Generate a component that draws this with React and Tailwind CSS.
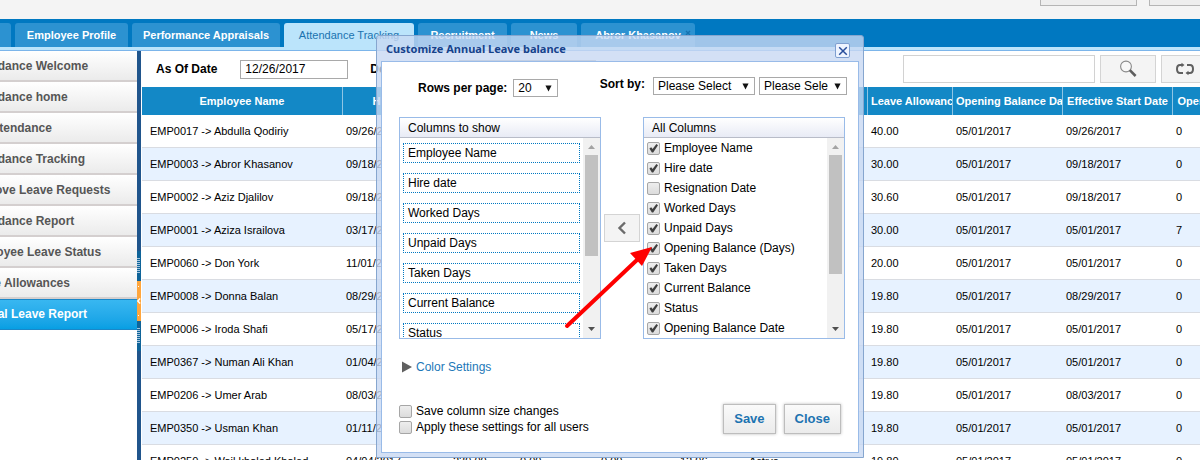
import { useState } from "react";

const tabs = [
  { label: "Employee Profile", width: "w-[113px]" },
  { label: "Performance Appraisals", width: "w-[148px]" },
  { label: "Attendance Tracking", width: "w-[130px]", active: true },
  { label: "Recruitment", width: "w-[89px]" },
  { label: "News", width: "w-[66px]" },
  { label: "Abror Khasanov", width: "w-[114px]", closable: true },
];

const menu = [
  "Attendance Welcome",
  "Attendance home",
  "My Attendance",
  "Attendance Tracking",
  "Approve Leave Requests",
  "Attendance Report",
  "Employee Leave Status",
  "Leave Allowances",
  "Annual Leave Report",
];

const columns = [
  { title: "Employee Name", width: "w-[201px]" },
  { title: "Hire date", width: "w-[107px]" },
  { title: "", width: "w-[67px]" },
  { title: "", width: "w-[81px]" },
  { title: "", width: "w-[79px]" },
  { title: "", width: "w-[69px]" },
  { title: "", width: "w-[122px]" },
  { title: "Leave Allowance", width: "w-[85px]" },
  { title: "Opening Balance Date", width: "w-[110px]" },
  { title: "Effective Start Date", width: "w-[110px]" },
  { title: "Opening Balance", width: "w-[100px]" },
];

const rows = [
  ["EMP0017 -> Abdulla Qodiriy", "09/26/2017", "", "", "", "", "", "40.00", "05/01/2017", "09/26/2017", "0"],
  ["EMP0003 -> Abror Khasanov", "09/18/2017", "", "", "", "", "", "30.00", "05/01/2017", "09/18/2017", "0"],
  ["EMP0002 -> Aziz Djalilov", "09/18/2017", "", "", "", "", "", "30.60", "05/01/2017", "09/18/2017", "0"],
  ["EMP0001 -> Aziza Israilova", "03/17/2017", "", "", "", "", "", "30.00", "05/01/2017", "05/01/2017", "7"],
  ["EMP0060 -> Don York", "11/01/2017", "", "", "", "", "", "20.00", "05/01/2017", "05/01/2017", "0"],
  ["EMP0008 -> Donna Balan", "08/29/2017", "", "", "", "", "", "19.80", "05/01/2017", "08/29/2017", "0"],
  ["EMP0006 -> Iroda Shafi", "05/17/2017", "", "", "", "", "", "19.80", "05/01/2017", "05/01/2017", "0"],
  ["EMP0367 -> Numan Ali Khan", "01/04/2017", "", "", "", "", "", "19.80", "05/01/2017", "05/01/2017", "0"],
  ["EMP0206 -> Umer Arab", "08/03/2017", "", "", "", "", "", "19.80", "05/01/2017", "08/03/2017", "0"],
  ["EMP0350 -> Usman Khan", "01/11/2017", "", "", "", "", "", "19.80", "05/01/2017", "05/01/2017", "0"],
  ["EMP0250 -> Wail khaled Khaled", "04/04/2017", "239.00", "0.00", "0.00", "12.96", "Active", "19.80", "05/01/2017", "05/01/2017", "0"],
];

const shownColumns = [
  "Employee Name",
  "Hire date",
  "Worked Days",
  "Unpaid Days",
  "Taken Days",
  "Current Balance",
  "Status",
];

const allColumns = [
  "Employee Name",
  "Hire date",
  "Resignation Date",
  "Worked Days",
  "Unpaid Days",
  "Opening Balance (Days)",
  "Taken Days",
  "Current Balance",
  "Status",
  "Opening Balance Date",
];

const Checkbox = ({ label, checked, onChange }) => (
  <label className="flex items-center gap-1">
    <span className="relative block h-[13px] w-[13px]">
      <input
        type="checkbox"
        checked={checked}
        onChange={onChange}
        className="block h-[13px] w-[13px] appearance-none rounded-[2px] border border-[#a6a6a6] bg-linear-to-b from-[#eeeeee] to-[#dcdcdc]"
      />
      {checked && (
        <svg viewBox="0 0 13 13" className="pointer-events-none absolute inset-0" aria-hidden="true">
          <path d="M2.4 6.6 L4.2 5.2 L5.6 7 L9.4 2 L11 3.2 L6.2 10.6 L4.9 10.6 Z" fill="#404040" />
        </svg>
      )}
    </span>
    <span>{label}</span>
  </label>
);

const Select = ({ id, label, value, width }) => (
  <span className={`relative block h-[18px] ${width}`}>
    <select
      id={id}
      aria-label={label}
      defaultValue={value}
      className="block h-full w-full appearance-none border border-[#a9a9a9] bg-white pl-1 pr-[18px] text-xs leading-4 text-black"
    >
      <option>{value}</option>
    </select>
    <svg viewBox="0 0 8 7" className="pointer-events-none absolute right-[6px] top-[6px] h-[7px] w-[7px]" aria-hidden="true">
      <path d="M0.5 0 H7.5 L4 7 Z" fill="#111" />
    </svg>
  </span>
);

const Scrollbar = ({ thumb }) => (
  <div className="flex w-[17px] shrink-0 flex-col items-center bg-[#f1f1f1]" aria-hidden="true">
    <svg viewBox="0 0 17 17" className="h-[17px] w-[17px] shrink-0">
      <path d="M5 11 L8.5 7 L12 11 Z" fill="#a3a3a3" />
    </svg>
    <div className={`w-[13px] bg-[#c1c1c1] ${thumb}`} />
    <svg viewBox="0 0 17 17" className="mt-auto h-[17px] w-[17px] shrink-0">
      <path d="M5 6 L8.5 10 L12 6 Z" fill="#505050" />
    </svg>
  </div>
);

const Panel = ({ title, thumb, children }) => (
  <section className="flex h-[222px] flex-1 flex-col border border-[#99bbe8]">
    <h3 className="h-[20px] shrink-0 border-b border-[#b8bcc8] bg-linear-to-b from-white to-[#e8ebf5] px-2 text-xs leading-5">
      {title}
    </h3>
    <div className="flex min-h-0 flex-1">
      <div className="min-w-0 flex-1 overflow-hidden">{children}</div>
      <Scrollbar thumb={thumb} />
    </div>
  </section>
);

const Grip = () => (
  <div className="flex h-[30px] items-center bg-[#0f6499]">
    <svg viewBox="0 0 4 16" className="h-4 w-full" preserveAspectRatio="none" aria-hidden="true">
      <path d="M0 0.5H3M0 2.5H3M0 4.5H3M0 6.5H3M0 8.5H3M0 10.5H3M0 12.5H3M0 14.5H3" stroke="#a3c4de" strokeWidth="1" />
    </svg>
  </div>
);

const CustomizeDialog = () => {
  const [checked, setChecked] = useState(allColumns.filter((name) => name !== "Resignation Date"));
  const [saveSizes, setSaveSizes] = useState(false);
  const [applyAll, setApplyAll] = useState(false);

  const toggle = (name) => {
    setChecked((prev) => (prev.includes(name) ? prev.filter((n) => n !== name) : [...prev, name]));
  };

  return (
    <div
      role="dialog"
      aria-labelledby="dialog-title"
      className="absolute left-[376px] top-[35px] w-[488px] rounded-t-[3px] border border-[#86a6cf] bg-[#c8d8f2]/80 px-1 pb-1 text-xs text-black"
    >
      <header className="flex h-[25px] items-center justify-between pl-[5px] pr-[9px]">
        <h2 id="dialog-title" className="font-['Noto_Sans'] text-[11px] font-bold leading-4 text-[#15428b]">
          Customize Annual Leave balance
        </h2>
        <button
          type="button"
          aria-label="Close window"
          className="mt-1 flex h-[15px] w-[15px] items-center justify-center rounded-[2px] border border-[#7f9fd0] bg-[#eef4ff]"
        >
          <svg viewBox="0 0 12 12" className="h-3 w-3 shrink-0" aria-hidden="true">
            <path d="M2.2 2.2 L9.8 9.8 M9.8 2.2 L2.2 9.8" stroke="#2a4f9c" strokeWidth="1.5" />
          </svg>
        </button>
      </header>

      <div className="border border-[#99bbe8] bg-white pb-[17px] pl-[17px] pr-[11px] pt-[15px]">
        <div className="flex items-start justify-between pl-[19px]">
          <div className="flex items-center gap-[6px] pt-[2px]">
            <label htmlFor="rows" className="font-bold">Rows per page:</label>
            <Select id="rows" value="20" width="w-[45px]" />
          </div>
          <div className="flex items-start gap-1">
            <label htmlFor="sort" className="pr-1 font-bold leading-[14px]">Sort by:</label>
            <Select id="sort" value="Please Select" width="w-[102px]" />
            <Select label="Sort direction" value="Please Select" width="w-[88px]" />
          </div>
        </div>

        <div className="mt-5 flex items-center gap-[3px] pr-[2px]">
          <Panel title="Columns to show" thumb="h-[101px]">
            <ul className="flex flex-col gap-[10px] px-[3px] pt-[5px]">
              {shownColumns.map((name) => (
                <li key={name} className="h-5 shrink-0 border border-dotted border-[#0078c1] px-1 leading-[18px]">
                  {name}
                </li>
              ))}
            </ul>
          </Panel>
          <button
            type="button"
            aria-label="Move to columns to show"
            className="flex h-7 w-9 items-center justify-center border border-[#d4d4d4] bg-[#f4f4f4]"
          >
            <svg viewBox="0 0 10 14" className="h-[14px] w-[10px]" aria-hidden="true">
              <path d="M8 1.5 L2.5 7 L8 12.5" fill="none" stroke="#6b6b6b" strokeWidth="2.4" />
            </svg>
          </button>
          <Panel title="All Columns" thumb="h-[119px]">
            <div className="flex flex-col pl-[3px]">
              {allColumns.map((name) => (
                <div key={name} className="flex h-5 shrink-0 items-center">
                  <Checkbox label={name} checked={checked.includes(name)} onChange={() => toggle(name)} />
                </div>
              ))}
            </div>
          </Panel>
        </div>

        <button type="button" className="mt-5 flex items-center gap-1 pl-[3px] leading-4 text-[#1c78b8]">
          <svg viewBox="0 0 10 12" className="h-3 w-[10px]" aria-hidden="true">
            <path d="M0 0.5 L10 6 L0 11.5 Z" fill="#606060" />
          </svg>
          Color Settings
        </button>

        <div className="mt-7 flex items-center justify-between pr-[6px]">
          <div className="leading-4">
            <Checkbox label="Save column size changes" checked={saveSizes} onChange={() => setSaveSizes(!saveSizes)} />
            <Checkbox label="Apply these settings for all users" checked={applyAll} onChange={() => setApplyAll(!applyAll)} />
          </div>
          <div className="flex gap-2 text-[13px] font-bold text-[#1c73b1]">
            {["Save", "Close"].map((name) => (
              <button
                key={name}
                type="button"
                className="h-[30px] border border-[#bdbdbd] bg-linear-to-b from-[#fafafa] to-[#ebebeb] px-[10px] shadow-[0_0_3px_#bbb]"
              >
                {name}
              </button>
            ))}
          </div>
        </div>
      </div>
    </div>
  );
};

const App = () => {
  return (
    <div className="relative flex h-screen flex-col overflow-hidden bg-white font-['Liberation_Sans',Arial,sans-serif] text-black">
      <div className="flex h-[19px] shrink-0 items-start justify-end gap-3 bg-[#f4f4f4]">
        <div className="h-[6px] w-[97px] border border-t-0 border-[#b5b5b5] bg-[#eeeeee]" />
        <div className="-mr-[46px] h-[6px] w-[97px] border border-t-0 border-[#b5b5b5] bg-[#eeeeee]" />
      </div>

      <nav className="flex h-7 shrink-0 items-end gap-1 bg-[#0078c1] text-[11px]">
        <a href="#home" aria-label="Home" className="h-6 w-[11px] rounded-tr-[3px] bg-[#2c92d1]" />
        {tabs.map((tab) => (
          <a
            key={tab.label}
            href="#tab"
            className={`relative flex h-6 items-center justify-center whitespace-nowrap rounded-t-[3px] ${tab.width} ${
              tab.active ? "bg-[#bbe4fb] text-[#1a73b0]" : "bg-[#2c92d1] font-bold text-white"
            }`}
          >
            {tab.label}
            {tab.closable && (
              <svg viewBox="0 0 6 6" className="absolute right-1 top-[7px] h-[6px] w-[6px]" aria-hidden="true">
                <path d="M1 1 L5 5 M5 1 L1 5" stroke="#1672b0" strokeWidth="1.4" />
              </svg>
            )}
          </a>
        ))}
      </nav>
      <div className="h-1 shrink-0 border-b border-[#7cb5ea] bg-[#bbe4fb]" />

      <div className="flex min-h-0 flex-1">
        {/* sidebar starts left of the viewport, the page is scrolled sideways */}
        <aside className="-ml-12 w-[185px] shrink-0 text-xs font-bold">
          {menu.map((item) =>
            item === "Annual Leave Report" ? (
              <a
                key={item}
                href="#report"
                className="block h-[31px] border-y border-[#1a87c8] bg-linear-to-b from-[#38b7f1] to-[#069fe3] pl-[15px] leading-[29px] text-white"
              >
                {item}
              </a>
            ) : (
              <a
                key={item}
                href="#item"
                className="block h-[31px] border-b-2 border-[#d4cfcf] bg-linear-to-b from-white to-[#ebebeb] pl-[15px] leading-[31px] text-[#565656]"
              >
                {item}
              </a>
            )
          )}
        </aside>

        <div className="mr-px w-1 shrink-0 bg-[#20558c]">
          <div className="h-[200px]" />
          <Grip />
          <div className="flex h-10 items-center bg-[#ffa63d]">
            <svg viewBox="0 0 4 32" className="h-8 w-full" aria-hidden="true">
              <path d="M3.2 13.5 L0.8 16 L3.2 18.5" fill="none" stroke="#fff" strokeWidth="1.4" />
              <path d="M1 1h1v1H1zM1 30h1v1H1z" fill="#fff" />
            </svg>
          </div>
          <Grip />
        </div>

        <main className="min-w-0 flex-1 overflow-hidden">
          <div className="flex h-9 items-center pl-[14px] text-xs">
            <label htmlFor="date" className="mr-[23px] shrink-0 font-bold">As Of Date</label>
            <input
              id="date"
              type="text"
              defaultValue="12/26/2017"
              className="h-[19px] w-[108px] shrink-0 border border-[#a9a9a9] px-1"
            />
            <label htmlFor="dept" className="ml-[22px] w-[89px] shrink-0 font-bold">Department</label>
            <select id="dept" className="h-[19px] w-[137px] shrink-0 appearance-none border border-[#a9a9a9]" />
            <div className="-mr-[17px] ml-auto flex shrink-0 gap-[5px]">
              <input type="search" aria-label="Search" className="h-7 w-[192px] border border-[#d2d2d2]" />
              <button type="button" aria-label="Search" className="flex h-7 w-14 items-center justify-center border border-[#d4d4d4] bg-[#f4f4f4]">
                <svg viewBox="0 0 18 18" className="h-[18px] w-[18px]" aria-hidden="true">
                  <circle cx="7" cy="6.5" r="5.4" fill="#f8f8f8" stroke="#8a8a8a" strokeWidth="1.1" />
                  <path d="M10.8 10.2 L16.6 16" stroke="#5e5e5e" strokeWidth="2.6" />
                </svg>
              </button>
              <button type="button" aria-label="Refresh" className="flex h-7 w-14 items-center border border-[#d4d4d4] bg-[#f4f4f4] pl-[13px]">
                <svg viewBox="0 0 20 14" className="h-[14px] w-5" aria-hidden="true">
                  <path d="M7 3 H5 Q2 3 2 7 Q2 11 5 11 H8" fill="none" stroke="#606060" strokeWidth="2" />
                  <path d="M12 3 H15 Q18 3 18 7 Q18 11 15 11 H13" fill="none" stroke="#606060" strokeWidth="2" />
                  <path d="M6.5 0.8 V5.2 L9.5 3 Z M13.5 8.8 V13.2 L10.5 11 Z" fill="#606060" />
                </svg>
              </button>
            </div>
          </div>

          <table className="w-[1131px] min-w-full table-fixed border-separate border-spacing-0 text-[11px]">
            <thead>
              <tr className="h-7 bg-[#1388c6] text-white">
                {columns.map((col, i) => (
                  <th key={i} className={`overflow-hidden whitespace-nowrap border-r border-[#8fc5e4] px-[3px] py-0 text-center font-bold ${col.width}`}>
                    {col.title}
                  </th>
                ))}
              </tr>
            </thead>
            <tbody>
              {rows.map((row) => (
                <tr key={row[0]} className="h-[33px] even:bg-[#e7f2ff]">
                  {row.map((cell, i) => (
                    <td key={i} className={`whitespace-nowrap border-b border-[#d9dce2] py-0 pr-0 ${i === 0 ? "pl-2" : "pl-[3px]"}`}>
                      {cell}
                    </td>
                  ))}
                </tr>
              ))}
            </tbody>
          </table>
        </main>
      </div>

      <CustomizeDialog />

      {/* red pointer at the Opening Balance option */}
      <svg viewBox="0 0 92 84" className="pointer-events-none absolute left-[564px] top-[245px] h-[84px] w-[92px]" aria-hidden="true">
        <path d="M3 81 L74 14" stroke="#fe0000" strokeWidth="4" strokeLinecap="round" />
        <path d="M88 2 L66 8 L78 21 Z" fill="#fe0000" />
      </svg>
    </div>
  );
};

export default App;
